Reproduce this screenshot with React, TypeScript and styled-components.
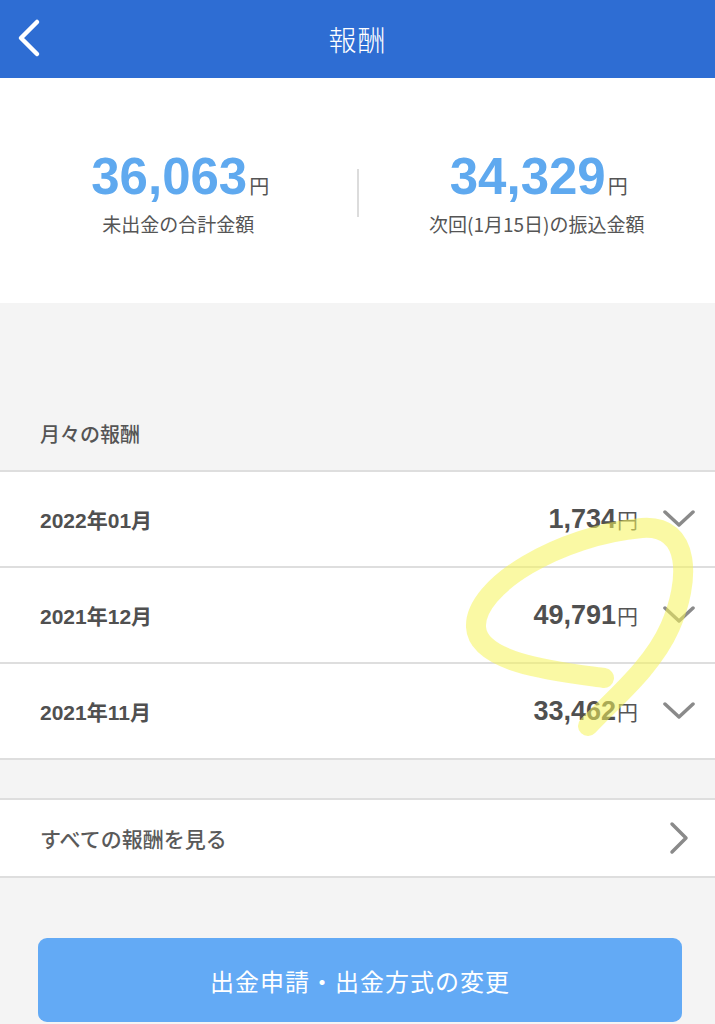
import styled, { createGlobalStyle } from "styled-components";

const GlobalStyle = createGlobalStyle`
  html, body {
    margin: 0;
    padding: 0;
    background: #f4f4f4;
  }
  body {
    font-family: "Liberation Sans", "Noto Sans CJK JP", sans-serif;
  }
`;

const dataSummary = [
  { amount: "36,063", label: "未出金の合計金額" },
  { amount: "34,329", label: "次回(1月15日)の振込金額" },
];

const dataMonthly = [
  { month: "2022年01月", amount: "1,734" },
  { month: "2021年12月", amount: "49,791" },
  { month: "2021年11月", amount: "33,462" },
];

const App = () => {
  return (
    <Page>
      <GlobalStyle />
      <Header>
        <BackButton>
          <svg width="24" height="40" viewBox="0 0 24 40">
            <polyline
              points="20,4 4,20 20,36"
              fill="none"
              stroke="#fff"
              strokeWidth="4.5"
              strokeLinecap="round"
              strokeLinejoin="round"
            />
          </svg>
        </BackButton>
        <HeaderTitle>報酬</HeaderTitle>
      </Header>

      <Summary>
        <SummaryItem>
          <SummaryAmount>
            {dataSummary[0].amount}
            <Yen>円</Yen>
          </SummaryAmount>
          <SummaryLabel>{dataSummary[0].label}</SummaryLabel>
        </SummaryItem>
        <Divider />
        <SummaryItem>
          <SummaryAmount>
            {dataSummary[1].amount}
            <Yen>円</Yen>
          </SummaryAmount>
          <SummaryLabel>{dataSummary[1].label}</SummaryLabel>
        </SummaryItem>
      </Summary>

      <SectionHead>月々の報酬</SectionHead>

      <List>
        {dataMonthly.map((each, index) => (
          <MonthRow key={index}>
            <MonthText>{each.month}</MonthText>
            <MonthAmount>
              {each.amount}
              <SmallYen>円</SmallYen>
            </MonthAmount>
            <IconBox>
              <svg width="32" height="20" viewBox="0 0 32 20">
                <polyline
                  points="2,3 16,16 30,3"
                  fill="none"
                  stroke="#8a8a8a"
                  strokeWidth="3.5"
                  strokeLinecap="round"
                  strokeLinejoin="round"
                />
              </svg>
            </IconBox>
          </MonthRow>
        ))}
      </List>

      <Spacer />

      <List>
        <LinkRow>
          <LinkText>すべての報酬を見る</LinkText>
          <IconBox>
            <svg width="20" height="34" viewBox="0 0 20 34">
              <polyline
                points="3,3 17,17 3,31"
                fill="none"
                stroke="#8a8a8a"
                strokeWidth="3.5"
                strokeLinecap="round"
                strokeLinejoin="round"
              />
            </svg>
          </IconBox>
        </LinkRow>
      </List>

      <ButtonArea>
        <MainButton>出金申請・出金方式の変更</MainButton>
      </ButtonArea>

      <Marker width="715" height="1024" viewBox="0 0 715 1024">
        <path
          d="M 604 678 C 560 672, 478 664, 476 627 C 474 586, 560 535, 642 528 C 692 524, 690 582, 670 627 C 652 668, 612 700, 588 726"
          fill="none"
          stroke="rgba(246, 244, 90, 0.55)"
          strokeWidth="20"
          strokeLinecap="round"
          strokeLinejoin="round"
        />
      </Marker>
    </Page>
  );
};

const Page = styled.div`
  position: relative;
  width: 715px;
  height: 1024px;
  overflow: hidden;
  background: #f4f4f4;
`;

const Header = styled.div`
  position: relative;
  display: flex;
  align-items: center;
  justify-content: center;
  height: 78px;
  background: #2e6dd3;
`;

const BackButton = styled.div`
  position: absolute;
  left: 17px;
  top: 18px;
  display: flex;
`;

const HeaderTitle = styled.div`
  color: #fff;
  font-family: "Noto Sans CJK JP", sans-serif;
  font-size: 28px;
  font-weight: 300;
  letter-spacing: 1px;
`;

const Summary = styled.div`
  display: grid;
  grid-template-columns: 1fr auto 1fr;
  align-items: center;
  height: 225px;
  padding-top: 6px;
  box-sizing: border-box;
  background: #fff;
`;

const SummaryItem = styled.div`
  display: flex;
  flex-direction: column;
  align-items: center;
`;

const SummaryAmount = styled.div`
  display: flex;
  align-items: baseline;
  color: #5fa9ef;
  font-size: 51px;
  font-weight: 700;
  line-height: 56px;
  padding-left: 4px;
`;

const Yen = styled.span`
  font-family: "Noto Sans CJK JP", sans-serif;
  font-size: 20px;
  font-weight: 400;
  color: #555;
  margin-left: 2px;
`;

const SummaryLabel = styled.div`
  margin-top: -4px;
  color: #555;
  font-size: 19px;
  line-height: 28px;
  font-family: "Noto Sans CJK JP", sans-serif;
`;

const Divider = styled.div`
  width: 2px;
  height: 48px;
  background: #dcdcdc;
  margin-top: -2px;
`;

const SectionHead = styled.div`
  padding: 117px 40px 22px;
  color: #555;
  font-family: "Noto Sans CJK JP", sans-serif;
  font-size: 20px;
  font-weight: 500;
  line-height: 28px;
`;

const List = styled.div`
  display: flex;
  flex-direction: column;
  background: #fff;
  border-top: 2px solid #dedede;
`;

const MonthRow = styled.div`
  display: flex;
  align-items: center;
  height: 94px;
  padding: 0 17px 0 40px;
  border-bottom: 2px solid #dedede;
`;

const MonthText = styled.div`
  flex: 1;
  color: #505050;
  font-size: 21px;
  font-weight: 700;
`;

const MonthAmount = styled.div`
  display: flex;
  align-items: baseline;
  color: #505050;
  font-size: 27px;
  font-weight: 700;
`;

const SmallYen = styled.span`
  font-family: "Noto Sans CJK JP", sans-serif;
  font-size: 21px;
  font-weight: 400;
  color: #555;
  margin-left: 1px;
`;

const IconBox = styled.div`
  display: flex;
  align-items: center;
  justify-content: center;
  width: 38px;
  margin-left: 22px;
`;

const Spacer = styled.div`
  height: 38px;
`;

const LinkRow = styled.div`
  display: flex;
  align-items: center;
  height: 76px;
  padding: 0 17px 0 40px;
  border-bottom: 2px solid #dedede;
`;

const LinkText = styled.div`
  flex: 1;
  color: #5a5a5a;
  font-family: "Noto Sans CJK JP", sans-serif;
  font-size: 21px;
  font-weight: 500;
`;

const ButtonArea = styled.div`
  padding: 60px 33px 0 38px;
`;

const MainButton = styled.div`
  display: flex;
  align-items: center;
  justify-content: center;
  height: 84px;
  border-radius: 9px;
  background: #63aaf5;
  color: #fff;
  font-family: "Noto Sans CJK JP", sans-serif;
  font-size: 24px;
  font-weight: 400;
  letter-spacing: 1px;
`;

const Marker = styled.svg`
  position: absolute;
  left: 0;
  top: 0;
  pointer-events: none;
`;

export default App;
